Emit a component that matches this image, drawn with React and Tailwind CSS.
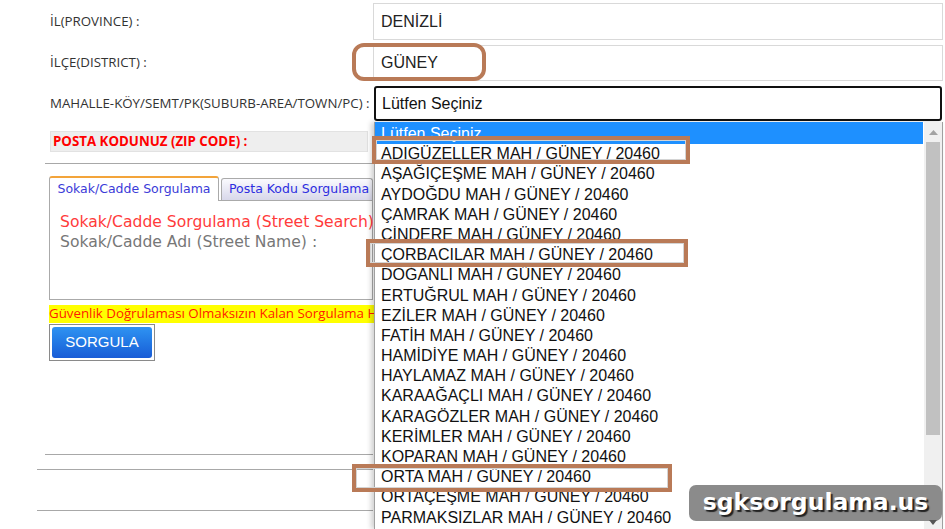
import React from 'react';

const items = [
  'ADIGÜZELLER MAH / GÜNEY / 20460',
  'AŞAĞIÇEŞME MAH / GÜNEY / 20460',
  'AYDOĞDU MAH / GÜNEY / 20460',
  'ÇAMRAK MAH / GÜNEY / 20460',
  'ÇİNDERE MAH / GÜNEY / 20460',
  'ÇORBACILAR MAH / GÜNEY / 20460',
  'DOĞANLI MAH / GÜNEY / 20460',
  'ERTUĞRUL MAH / GÜNEY / 20460',
  'EZİLER MAH / GÜNEY / 20460',
  'FATİH MAH / GÜNEY / 20460',
  'HAMİDİYE MAH / GÜNEY / 20460',
  'HAYLAMAZ MAH / GÜNEY / 20460',
  'KARAAĞAÇLI MAH / GÜNEY / 20460',
  'KARAGÖZLER MAH / GÜNEY / 20460',
  'KERİMLER MAH / GÜNEY / 20460',
  'KOPARAN MAH / GÜNEY / 20460',
  'ORTA MAH / GÜNEY / 20460',
  'ORTAÇEŞME MAH / GÜNEY / 20460',
  'PARMAKSIZLAR MAH / GÜNEY / 20460',
];

const labelFont = "font-['Open_Sans',sans-serif]";
const arial = "font-['Liberation_Sans',Arial,sans-serif]";
const verdana = "font-['DejaVu_Sans',Verdana,sans-serif]";

function Row({ label, children, className }) {
  return (
    <div className={`flex items-center ${className}`}>
      <div className={`w-[373px] pl-[50px] text-[13.3px] text-[#333] whitespace-nowrap ${labelFont}`}>{label}</div>
      {children}
    </div>
  );
}

export default function App() {
  return (
    <div className="relative w-[945px] h-[529px] overflow-hidden bg-white">
      <div className="pt-[3px]">
        <Row label="İL(PROVINCE) :" className="h-[37px]">
          <div className={`w-[570px] h-full border border-[#d9d9d9] flex items-center pl-[7px] text-[16px] text-[#222] ${arial}`}>DENİZLİ</div>
        </Row>
        <Row label="İLÇE(DISTRICT) :" className="h-[36px] mt-[5px]">
          <div className={`w-[570px] h-full border border-[#d9d9d9] flex items-center pl-[7px] text-[16px] text-[#222] ${arial}`}>GÜNEY</div>
        </Row>
        <Row label="MAHALLE-KÖY/SEMT/PK(SUBURB-AREA/TOWN/PC) :" className="h-[35px] mt-[5px]">
          <div className={`ml-[1px] w-[568px] h-full border-2 border-[#111] rounded-[3px] flex items-center pl-[6px] text-[16px] text-[#111] ${arial}`}>Lütfen Seçiniz</div>
        </Row>

        <div className={`ml-[50px] mt-[10px] w-[318px] h-[21px] bg-[#eeeeee] border border-[#e2e2e2] flex items-center pl-[2px] text-[13.3px] font-bold text-[#ff0000] ${labelFont}`}>
          POSTA KODUNUZ (ZIP CODE) :
        </div>
        <div className="ml-[45px] mt-[11px] w-[328px] border-t border-[#a8a8a8]" />

        <div className="ml-[49px] mt-[11px] w-[324px]">
          <div className="flex items-end gap-[2px]">
            <div className={`w-[170px] h-[25px] bg-white border border-b-0 border-[#aaa] border-t-2 border-t-[#f3a43a] rounded-t-[3px] flex items-center justify-center text-[12.5px] text-[#3b3bd8] ${verdana} relative top-[1px]`}>
              Sokak/Cadde Sorgulama
            </div>
            <div className={`flex-1 h-[22px] bg-gradient-to-b from-[#fafafe] to-[#d8d8ea] border border-b-0 border-[#aaa] rounded-t-[3px] flex items-center pl-[7px] text-[12.5px] text-[#2d2de0] whitespace-nowrap ${verdana}`}>
              Posta Kodu Sorgulama
            </div>
          </div>
          <div className={`h-[100px] border border-[#aaa] pl-[10px] pt-[11px] text-[15.6px] leading-[20px] whitespace-nowrap ${verdana}`}>
            <div className="text-[#ff3b3b]">Sokak/Cadde Sorgulama (Street Search)</div>
            <div className="text-[#777]">Sokak/Cadde Adı (Street Name) :</div>
          </div>
          <div className={`mt-[5px] w-[380px] h-[18px] bg-[#ffff00] flex items-center text-[13.3px] text-[#ff1a00] whitespace-nowrap ${labelFont}`}>
            Güvenlik Doğrulaması Olmaksızın Kalan Sorgulama Hakkı
          </div>
          <div className="mt-[1px] w-[106px] h-[37px] border border-[#8a8a8a] p-[2px]">
            <div className={`h-full rounded-[3px] bg-gradient-to-b from-[#2f93f2] to-[#1a5cd6] flex items-center justify-center text-[15px] text-white ${arial}`}>
              SORGULA
            </div>
          </div>
        </div>

        <div className="ml-[45px] mt-[93px] w-[328px] border-t border-[#a8a8a8]" />
        <div className="ml-[37px] mt-[14px] w-[336px] border-t border-[#a8a8a8]" />
        <div className="ml-[37px] mt-[40px] w-[336px] border-t border-[#a8a8a8]" />
      </div>

      {/* open select list */}
      <div className="absolute left-[374px] top-[122px] w-[569px] h-[407px] bg-white border-l border-r border-[#a0a0a0] shadow-[-3px_0_5px_rgba(0,0,0,0.18)] flex">
        <div className={`flex-1 text-[16px] text-[#111] ${arial}`}>
          <div className="h-[22.2px] pt-[2px] leading-[20.2px] bg-[#1e90ff] text-white pl-[6px] mr-[1px]">Lütfen Seçiniz</div>
          {items.map((t) => (
            <div key={t} className="h-[20.2px] leading-[20.2px] pl-[6px] whitespace-nowrap">{t}</div>
          ))}
        </div>
        <div className="w-[18px] bg-[#f0f0f0] flex flex-col items-center">
          <div className="h-[20px] flex items-center justify-center">
            <svg width="9" height="5" viewBox="0 0 9 5"><path d="M0 5 L4.5 0 L9 5 Z" fill="#a3a3a3" /></svg>
          </div>
          <div className="w-[14px] h-[293px] bg-[#c1c1c1]" />
        </div>
      </div>

      {/* annotations */}
      <div className="absolute left-[352px] top-[43px] w-[134px] h-[38px] border-4 border-[#b97a57] rounded-[12px]" />
      <div className="absolute left-[372px] top-[136px] w-[318px] h-[28px] border-4 border-[#b97a57]">
        <div className="w-full h-full border border-[#d4d4d4]" />
      </div>
      <div className="absolute left-[366px] top-[239px] w-[322px] h-[28px] border-4 border-[#b97a57]">
        <div className="w-full h-full border border-[#d4d4d4]" />
      </div>
      <div className="absolute left-[352px] top-[464px] w-[320px] h-[28px] border-4 border-[#b97a57]">
        <div className="w-full h-full border border-[#d4d4d4]" />
      </div>

      {/* watermark */}
      <div className="absolute left-[689px] top-[485px] w-[253px] h-[36px] rounded-[7px] bg-[#858585]/95 flex items-center justify-center">
        <span className={`text-[23.5px] font-bold text-white leading-none ${verdana} [text-shadow:2px_2px_1px_#222]`}>sgksorgulama.us</span>
      </div>
      <div className="absolute left-[929px] top-[520px]">
        <svg width="8" height="5" viewBox="0 0 8 5"><path d="M0 0 L4 5 L8 0 Z" fill="#555" /></svg>
      </div>
    </div>
  );
}
